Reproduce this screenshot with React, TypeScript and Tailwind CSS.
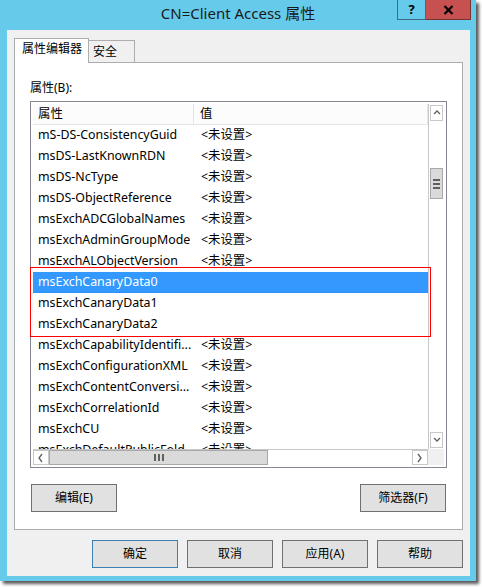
import React from 'react';

const font = 'font-["Noto_Sans","Noto_Sans_CJK_SC",sans-serif]';

const rows: [string, string][] = [
  ['mS-DS-ConsistencyGuid', '<未设置>'],
  ['msDS-LastKnownRDN', '<未设置>'],
  ['msDS-NcType', '<未设置>'],
  ['msDS-ObjectReference', '<未设置>'],
  ['msExchADCGlobalNames', '<未设置>'],
  ['msExchAdminGroupMode', '<未设置>'],
  ['msExchALObjectVersion', '<未设置>'],
  ['msExchCanaryData0', ''],
  ['msExchCanaryData1', ''],
  ['msExchCanaryData2', ''],
  ['msExchCapabilityIdentifi...', '<未设置>'],
  ['msExchConfigurationXML', '<未设置>'],
  ['msExchContentConversi...', '<未设置>'],
  ['msExchCorrelationId', '<未设置>'],
  ['msExchCU', '<未设置>'],
  ['msExchDefaultPublicFold...', '<未设置>'],
];

const Button: React.FC<{ label: string; primary?: boolean }> = ({ label, primary }) => (
  <div
    className={`w-[86px] h-[28px] flex items-center justify-center bg-[#e1e1e1] text-[12px] text-black border ${
      primary ? 'border-[#3c7fb1]' : 'border-[#707070]'
    }`}
  >
    {label}
  </div>
);

const Chevron: React.FC<{ dir: 'up' | 'down' | 'left' | 'right' }> = ({ dir }) => {
  const pts = {
    up: '2,6 5,3 8,6',
    down: '2,3 5,6 8,3',
    left: '6,1 3,5 6,9',
    right: '3,1 6,5 3,9',
  }[dir];
  return (
    <svg width="10" height="10" viewBox="0 0 10 10">
      <polyline points={pts} fill="none" stroke="#606060" strokeWidth="1.3" />
    </svg>
  );
};

const App: React.FC = () => {
  return (
    <div className={`w-[482px] h-[587px] bg-white ${font}`}>
      <div className="relative w-[476px] h-[581px] bg-[#66cbea] shadow-[3px_3px_3px_rgba(0,0,0,0.65)] flex flex-col">
        {/* Title bar */}
        <div className="h-[30px] flex items-center justify-center pb-[3px] text-[15px] text-[#1a1a1a]">
          CN=Client Access 属性
        </div>
        <div className="absolute top-0 right-[5px] flex h-[20px]">
          <div className="w-[29px] h-[20px] border border-[#3d6f84] border-t-0 flex items-center justify-center text-[13px] font-bold text-black">
            ?
          </div>
          <div className="w-[45px] h-[20px] bg-[#c75050] border border-[#7a3030] border-t-0 border-l-0 flex items-center justify-center">
            <svg width="11" height="10" viewBox="0 0 11 10">
              <path d="M1.5 1 L9.5 9 M9.5 1 L1.5 9" stroke="#000" strokeWidth="2.2" />
            </svg>
          </div>
        </div>

        {/* Client area */}
        <div className="mx-[7px] w-[463px] h-[546px] bg-[#f0f0f0] flex flex-col pt-[8px]">
          {/* Tabs */}
          <div className="flex items-end h-[24px] pl-[7px]">
            <div className="relative z-10 w-[75px] h-[25px] -mb-px bg-white border border-b-0 border-[#adadad] text-[12px] text-black pl-[7px] pt-[1px]">
              属性编辑器
            </div>
            <div className="w-[46px] h-[22px] bg-[#f0f0f0] border border-l-0 border-b-0 border-[#adadad] text-[12px] text-black pl-[4px] pt-[2px]">
              安全
            </div>
          </div>

          {/* Panel */}
          <div className="ml-[7px] w-[449px] h-[468px] bg-white border border-[#adadad] flex flex-col">
            <div className="ml-[15px] mt-[17px] h-[16px] leading-[16px] text-[12px] text-black">属性(B):</div>

            <div className="relative ml-[15px] mt-[5px] w-[417px] h-[367px] border border-[#828790] p-[2px]">
              <div className="grid grid-cols-[1fr_16px] grid-rows-[1fr_16px] w-full h-full">
                {/* Rows */}
                <div className="overflow-hidden text-[12.4px] text-black">
                  <div className="flex h-[21px] bg-[#fcfcfc] border-b border-[#e5e5e5] items-center">
                    <div className="w-[161px] h-full border-r border-[#e5e5e5] pl-[5px] flex items-center">属性</div>
                    <div className="flex-1 h-full pl-[6px] flex items-center border-r border-[#e5e5e5]">值</div>
                  </div>
                  {rows.map(([name, value], i) => {
                    const selected = i === 7;
                    return (
                      <div
                        key={name}
                        className={`flex h-[21px] items-center whitespace-nowrap ${
                          selected ? 'bg-[#3399ff] text-white border-b border-dotted border-[#777]' : ''
                        }`}
                      >
                        <div className="w-[161px] pl-[5px]">{name}</div>
                        <div className="flex-1 pl-[7px]">{value}</div>
                      </div>
                    );
                  })}
                </div>

                {/* Vertical scrollbar */}
                <div className="bg-white border-l border-[#c8c8c8] flex flex-col items-stretch">
                  <div className="h-[16px] mx-px mt-px border border-[#c8c8c8] flex items-center justify-center">
                    <Chevron dir="up" />
                  </div>
                  <div className="h-[47px]" />
                  <div className="h-[31px] mx-px bg-[#dadada] border border-[#a8a8a8] flex flex-col items-center justify-center gap-[2px]">
                    <div className="w-[7px] h-[2px] bg-[#606060]" />
                    <div className="w-[7px] h-[2px] bg-[#606060]" />
                    <div className="w-[7px] h-[2px] bg-[#606060]" />
                  </div>
                  <div className="flex-1" />
                  <div className="h-[16px] mx-px mb-px border border-[#c8c8c8] flex items-center justify-center">
                    <Chevron dir="down" />
                  </div>
                </div>

                {/* Horizontal scrollbar */}
                <div className="bg-white border-t border-[#c8c8c8] flex">
                  <div className="w-[16px] border border-[#c8c8c8] flex items-center justify-center">
                    <Chevron dir="left" />
                  </div>
                  <div className="w-[219px] bg-[#dadada] border border-[#a8a8a8] flex items-center justify-center gap-[2px]">
                    <div className="w-[2px] h-[7px] bg-[#606060]" />
                    <div className="w-[2px] h-[7px] bg-[#606060]" />
                    <div className="w-[2px] h-[7px] bg-[#606060]" />
                  </div>
                  <div className="flex-1" />
                  <div className="w-[16px] border border-[#c8c8c8] flex items-center justify-center">
                    <Chevron dir="right" />
                  </div>
                </div>
                <div className="bg-[#f0f0f0]" />
              </div>

              {/* Highlight box */}
              <div className="absolute left-[-1px] top-[165px] w-[401px] h-[70px] border-[1.5px] border-[#ff0000] pointer-events-none" />
            </div>

            <div className="flex justify-between px-[16px] mt-[16px]">
              <Button label="编辑(E)" />
              <Button label="筛选器(F)" />
            </div>
          </div>

          {/* Dialog buttons */}
          <div className="flex justify-end gap-[9px] pr-[7px] mt-[10px]">
            <Button label="确定" primary />
            <Button label="取消" />
            <Button label="应用(A)" />
            <Button label="帮助" />
          </div>
        </div>
      </div>
    </div>
  );
};

export default App;
